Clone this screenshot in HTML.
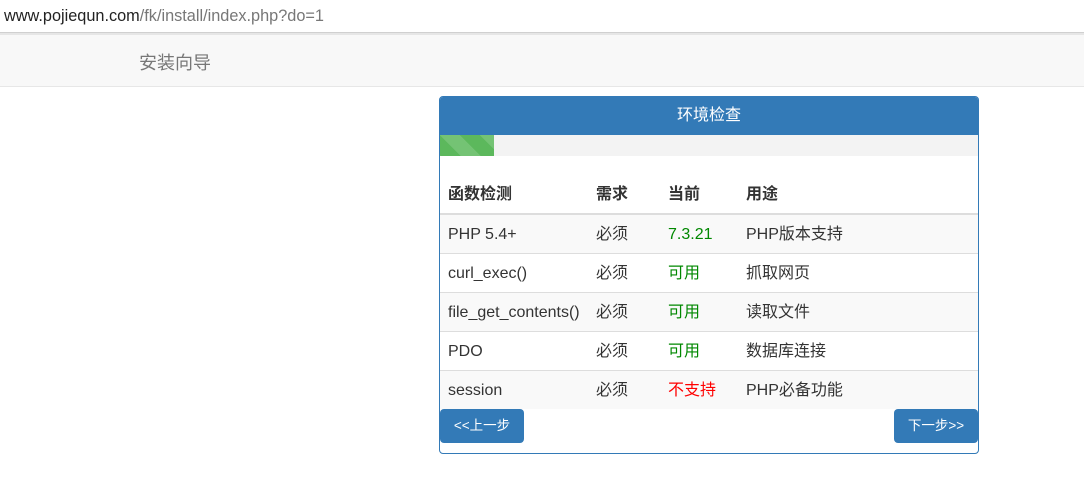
<!DOCTYPE html>
<html><head><meta charset="utf-8"><style>
*{box-sizing:border-box;margin:0;padding:0}
body{width:1084px;height:484px;background:#fff;font-family:"Liberation Sans","Noto Sans CJK SC",sans-serif;font-size:16px;color:#333;position:relative;overflow:hidden}
.url{position:absolute;left:4px;top:7px;font-size:16.3px;color:#222}
.url span{color:#777}
.sep{position:absolute;left:0;top:32px;width:1084px;height:3px;background:#e6e6e6;border-top:1px solid #d0d0d0}
.nav{position:absolute;left:0;top:35px;width:1084px;height:52px;background:#f8f8f8;border-bottom:1px solid #e7e7e7}
.nav div{position:absolute;left:139px;top:14px;font-size:18px;color:#777}
.panel{position:absolute;left:439px;top:96px;width:540px;height:358px;border:1px solid #337ab7;border-radius:4px;overflow:hidden}
.head{height:38px;background:#337ab7;color:#fff;text-align:center;line-height:38px;font-size:16px}
.prog{height:21px;background:#f3f3f3}
.bar{width:54px;height:21px;background-color:#5cb85c;background-image:linear-gradient(45deg,rgba(255,255,255,.15) 25%,transparent 25%,transparent 50%,rgba(255,255,255,.15) 50%,rgba(255,255,255,.15) 75%,transparent 75%,transparent);background-size:40px 40px}
table{border-collapse:collapse;width:100%;margin-top:17px}
th{text-align:left;font-weight:bold;height:41px;padding:3px 8px 0;border-bottom:2px solid #ddd;vertical-align:middle;line-height:20px}
td{height:39px;padding:2px 8px 0;border-top:1px solid #ddd;vertical-align:middle;line-height:20px;white-space:nowrap}
tr.o td{background:#f9f9f9}
.g{color:#080}.r{color:#f00}
.btn{position:absolute;top:312px;height:34px;background:#337ab7;color:#fff;font-size:13.5px;line-height:34px;text-align:center;border-radius:4px}
</style></head><body>
<div class="url">www.pojiequn.com<span>/fk/install/index.php?do=1</span></div>
<div class="sep"></div>
<div class="nav"><div>安装向导</div></div>
<div class="panel">
<div class="head">环境检查</div>
<div class="prog"><div class="bar"></div></div>
<table>
<tr><th style="width:148px">函数检测</th><th style="width:72px">需求</th><th style="width:78px">当前</th><th>用途</th></tr>
<tr class="o"><td>PHP 5.4+</td><td>必须</td><td class="g">7.3.21</td><td>PHP版本支持</td></tr>
<tr><td>curl_exec()</td><td>必须</td><td class="g">可用</td><td>抓取网页</td></tr>
<tr class="o"><td>file_get_contents()</td><td>必须</td><td class="g">可用</td><td>读取文件</td></tr>
<tr><td>PDO</td><td>必须</td><td class="g">可用</td><td>数据库连接</td></tr>
<tr class="o"><td>session</td><td>必须</td><td class="r">不支持</td><td>PHP必备功能</td></tr>
</table>
<div class="btn" style="left:0;width:84px">&lt;&lt;上一步</div>
<div class="btn" style="right:0;width:84px">下一步&gt;&gt;</div>
</div>
</body></html>
